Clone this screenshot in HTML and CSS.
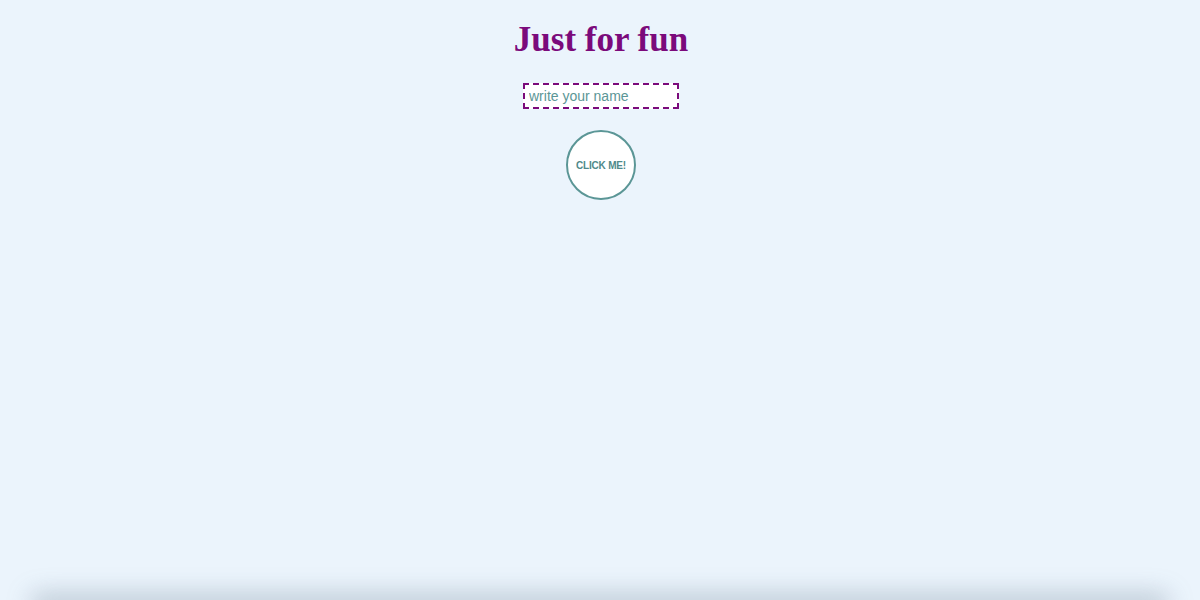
FILE: index.html
```html
<!DOCTYPE html>
<html>
<head>
<meta charset="utf-8">
<link rel="stylesheet" href="styles.css">
</head>
<body>
<main class="page">
  <h1 class="title">Just for fun</h1>
  <input class="name-input" type="text" placeholder="write your name">
  <button class="click-btn">CLICK ME!</button>
</main>
<div class="bottom-shadow"></div>
</body>
</html>
```
FILE: styles.css
```css
html, body {
  margin: 0;
  height: 100%;
}
body {
  background: #ebf4fc;
  font-family: "Liberation Serif", serif;
  overflow: hidden;
  position: relative;
}
.page {
  display: flex;
  flex-direction: column;
  align-items: center;
  padding-top: 20px;
}
.title {
  margin: 0 0 0 2px;
  font-family: "Liberation Serif", serif;
  font-weight: bold;
  font-size: 35px;
  line-height: 40px;
  color: #7b0a7b;
}
.name-input {
  margin-top: 23px;
  margin-left: 2px;
  width: 156px;
  height: 26px;
  box-sizing: border-box;
  border: 2px dashed #7b0a7b;
  background: #fff;
  padding: 0 4px;
  font-family: "Liberation Sans", sans-serif;
  font-size: 14px;
  color: #5b9696;
  outline: none;
}
.name-input::placeholder {
  color: #5b9696;
}
.click-btn {
  margin-top: 21px;
  margin-left: 2px;
  width: 70px;
  height: 70px;
  box-sizing: border-box;
  border-radius: 50%;
  border: 2px solid #5b9696;
  background: #fff;
  color: #4f8a8a;
  font-family: "Liberation Sans", sans-serif;
  font-weight: bold;
  font-size: 10px;
  letter-spacing: -0.2px;
  padding: 0;
}
.bottom-shadow {
  position: absolute;
  left: 30px;
  right: 30px;
  bottom: -20px;
  height: 20px;
  box-shadow: 0 -6px 24px rgba(110, 130, 150, 0.4);
  border-radius: 20px;
}
```
